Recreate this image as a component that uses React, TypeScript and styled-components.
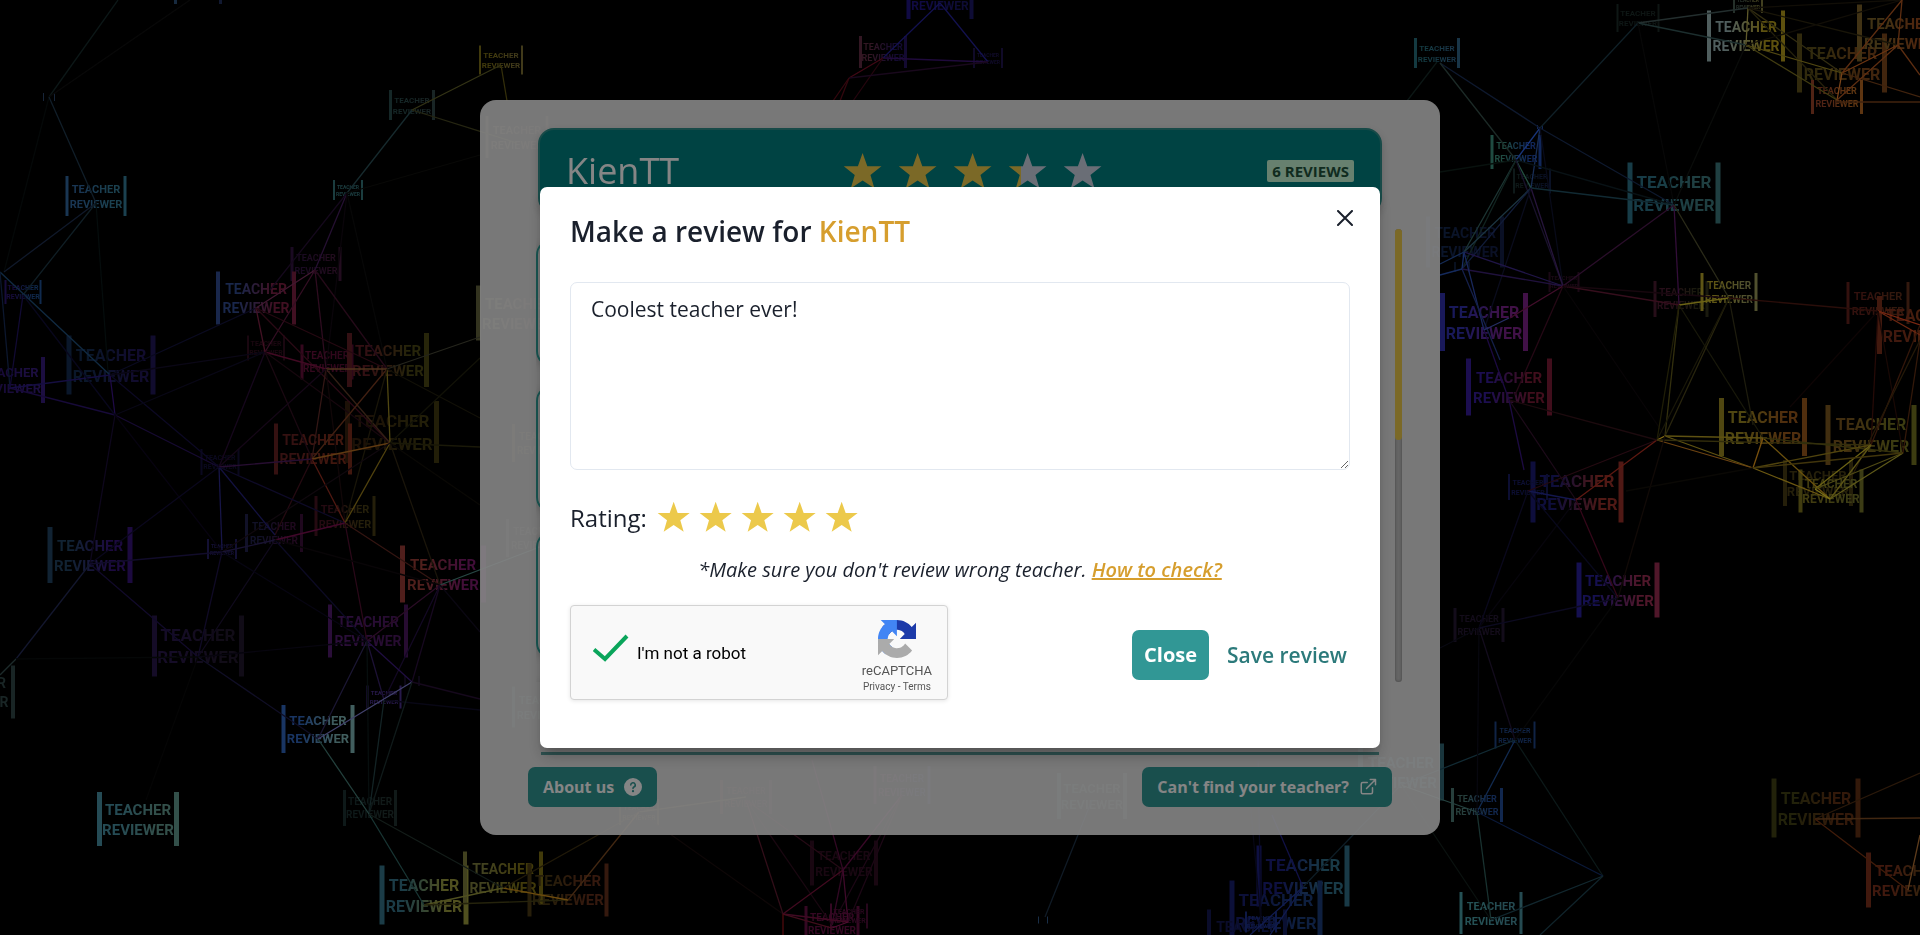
import React from "react";
import styled, { createGlobalStyle } from "styled-components";

const GlobalStyle = createGlobalStyle`
  *, *::before, *::after { box-sizing: border-box; }
  body {
    margin: 0;
    background: #000;
    color: #1a202c;
    font-family: "Open Sans", "Noto Sans", sans-serif;
    overflow: hidden;
  }
  button, textarea { font-family: inherit; }
`;

/* ---------- particle field ---------- */

type Mark = [x: number, y: number, width: number, left: string, right: string];
type Thread = [x1: number, y1: number, x2: number, y2: number, color: string];

const marks: Mark[] = [
  [49, 97, 12, "#1a2a40", "#1a2a40"],
  [198, -12, 48, "#1a3048", "#141c38"],
  [96, 196, 61, "#1d3d5e", "#1f4a5a"],
  [348, 190, 30, "#1f4548", "#1f4548"],
  [412, 105, 46, "#182c2c", "#1c2a2a"],
  [316, 264, 51, "#1e0c26", "#260e22"],
  [256, 298, 80, "#1c2c55", "#4a1226"],
  [23, 292, 37, "#1a0e44", "#123058"],
  [111, 365, 89, "#0c1a30", "#140e34"],
  [10, 380, 70, "#180a3a", "#20104a"],
  [266, 348, 38, "#1e0812", "#1e0812"],
  [327, 362, 53, "#3c0a22", "#34081e"],
  [388, 360, 82, "#3a1216", "#2c2a0c"],
  [392, 432, 94, "#201408", "#26220a"],
  [313, 449, 78, "#3c1414", "#4a1a10"],
  [220, 462, 39, "#0c0a24", "#0c0a20"],
  [90, 555, 85, "#14283a", "#200c48"],
  [222, 549, 30, "#16123a", "#16123a"],
  [274, 533, 58, "#14142e", "#240a22"],
  [345, 516, 61, "#2a0c14", "#2a240c"],
  [198, 646, 92, "#180e2c", "#140e1a"],
  [443, 574, 86, "#5a2420", "#4a1040"],
  [368, 631, 80, "#301040", "#2c0e38"],
  [384, 697, 35, "#2c1c54", "#2c1c54"],
  [412, 681, 15, "#1c1230", "#1c1230"],
  [318, 729, 73, "#1c3c70", "#4a6a6a"],
  [370, 808, 54, "#101c1c", "#141e1c"],
  [138, 819, 82, "#2a5560", "#3a5a54"],
  [-25, 692, 80, "#1c2a2a", "#1c2a2a"],
  [424, 895, 89, "#1f4450", "#5a5a24"],
  [503, 878, 80, "#4a4a24", "#4a420c"],
  [568, 890, 81, "#2c220c", "#3c1c10"],
  [844, 863, 68, "#1c0814", "#1c0814"],
  [832, 924, 55, "#3c0a28", "#3c0a28"],
  [849, 916, 38, "#3c0a28", "#2c0820"],
  [1303, 876, 93, "#10124a", "#1c4250"],
  [1276, 911, 93, "#0e1240", "#102448"],
  [1247, 936, 80, "#0c0e30", "#0c1238"],
  [1261, 922, 32, "#101c50", "#101c50"],
  [1043, 920, 10, "#1c3450", "#1c3450"],
  [940, -3, 67, "#120c4c", "#100e3c"],
  [883, 52, 48, "#3a1a28", "#160c38"],
  [988, 58, 30, "#120c2e", "#120c2e"],
  [501, 60, 44, "#4a420e", "#4a421e"],
  [1437, 53, 46, "#17424a", "#1c3c50"],
  [1638, 18, 43, "#101a18", "#101816"],
  [1748, 3, 30, "#2a3630", "#4a4824"],
  [1746, 36, 78, "#5a6a6a", "#6a5c10"],
  [1842, 63, 90, "#38300f", "#4a2a10"],
  [1900, 33, 86, "#4a3a18", "#5a2a10"],
  [1837, 97, 52, "#5a2818", "#6a3c14"],
  [1516, 152, 51, "#24554a", "#142c66"],
  [1532, 181, 38, "#101c1c", "#0c142a"],
  [1540, 127, 6, "#142c66", "#142c66"],
  [1674, 193, 93, "#1a4450", "#24484a"],
  [1465, 242, 78, "#0c1830", "#0c122a"],
  [1462, 267, 15, "#142448", "#142448"],
  [1484, 322, 88, "#1c1c66", "#4a1450"],
  [1509, 387, 86, "#20105a", "#4a1020"],
  [1564, 282, 31, "#1e0a18", "#1e0a18"],
  [1681, 299, 55, "#2c101c", "#1e1e10"],
  [1729, 292, 57, "#6a6018", "#5a5a34"],
  [1878, 303, 63, "#3a1410", "#3a1c10"],
  [1921, 325, 88, "#4a1c10", "#5a2c10"],
  [1763, 427, 88, "#5a5014", "#5a3410"],
  [1871, 435, 91, "#4a3412", "#444414"],
  [1818, 483, 70, "#2a240c", "#2a240c"],
  [1831, 491, 65, "#4a4412", "#444418"],
  [1577, 492, 93, "#101044", "#5a1c18"],
  [1528, 487, 40, "#0e103a", "#0e1034"],
  [1618, 590, 83, "#18125a", "#5a1a30"],
  [1479, 625, 51, "#160e1e", "#160e1e"],
  [1515, 735, 41, "#12284e", "#12284e"],
  [1477, 805, 52, "#2c4844", "#142c58"],
  [1491, 913, 63, "#2a5c60", "#2a545c"],
  [1401, 772, 86, "#1c3c44", "#1c3c44"],
  [1816, 808, 89, "#26260c", "#3a1c0c"],
  [1908, 880, 84, "#4a1c10", "#3a2a10"],
  [517, 137, 63, "#3a3020", "#2a221c"],
  [518, 313, 84, "#3a3a24", "#2c1216"],
  [541, 443, 58, "#2a2614", "#2a2614"],
  [535, 538, 58, "#24241e", "#24241e"],
  [543, 707, 62, "#1c302c", "#1c302c"],
  [746, 797, 52, "#2a1414", "#24101a"],
  [902, 785, 57, "#341428", "#1a1a36"],
  [639, 812, 40, "#2c2414", "#2c2414"],
  [1092, 796, 70, "#1c302c", "#24302e"],
];

const threads: Thread[] = [
  [49, 97, 118, 0, "#0e1a1a"],
  [49, 97, 190, 0, "#0a0a0a"],
  [49, 97, 4, 272, "#060a0a"],
  [49, 97, 96, 203, "#13222e"],
  [96, 203, 4, 272, "#121c30"],
  [96, 203, 23, 295, "#12222a"],
  [96, 203, 108, 372, "#060e0e"],
  [0, 272, 110, 375, "#13304a"],
  [0, 272, 10, 388, "#0e1a34"],
  [23, 295, 10, 388, "#140c3a"],
  [110, 375, 10, 388, "#18104a"],
  [110, 375, 115, 415, "#240c50"],
  [10, 388, 115, 415, "#1a0c40"],
  [115, 415, 219, 467, "#1a0c38"],
  [115, 415, 90, 564, "#100820"],
  [115, 415, 222, 552, "#080412"],
  [110, 375, 219, 467, "#0e0a28"],
  [23, 295, 115, 415, "#0a0820"],
  [110, 375, 256, 308, "#0c0c24"],
  [110, 375, 265, 352, "#0c0818"],
  [115, 415, 265, 352, "#0a0818"],
  [412, 110, 347, 193, "#1a3034"],
  [412, 110, 501, 65, "#3a3a18"],
  [412, 110, 517, 143, "#2a2a14"],
  [347, 193, 480, 155, "#0a0a08"],
  [347, 193, 315, 270, "#2a1238"],
  [347, 193, 270, 290, "#180a20"],
  [347, 193, 387, 369, "#080808"],
  [347, 193, 326, 369, "#0c060c"],
  [315, 270, 256, 308, "#4a1c38"],
  [315, 270, 265, 352, "#3a1028"],
  [315, 270, 326, 369, "#340e24"],
  [315, 270, 387, 369, "#2a0c1c"],
  [256, 308, 265, 352, "#4a1428"],
  [256, 308, 387, 369, "#2a0a14"],
  [256, 308, 390, 443, "#300c18"],
  [265, 352, 326, 369, "#4a0c28"],
  [265, 352, 219, 467, "#1a0820"],
  [265, 352, 312, 459, "#1e0a14"],
  [265, 352, 390, 443, "#1a0810"],
  [326, 369, 387, 369, "#5a3a20"],
  [326, 369, 390, 443, "#3a2418"],
  [326, 369, 312, 459, "#3a1a18"],
  [326, 369, 219, 467, "#18081a"],
  [326, 369, 345, 523, "#14080a"],
  [387, 369, 390, 443, "#5a5014"],
  [387, 369, 312, 459, "#4a2414"],
  [387, 369, 480, 337, "#2a2a20"],
  [387, 369, 480, 418, "#141208"],
  [387, 369, 345, 523, "#1c180a"],
  [312, 459, 390, 443, "#6a4014"],
  [312, 459, 219, 467, "#2c1038"],
  [312, 459, 345, 523, "#5a1c14"],
  [312, 459, 275, 535, "#2a0c14"],
  [390, 443, 480, 358, "#141408"],
  [390, 443, 480, 447, "#1e1c0a"],
  [390, 443, 345, 523, "#5a4a10"],
  [390, 443, 440, 585, "#1e180c"],
  [390, 443, 222, 552, "#120a10"],
  [390, 443, 480, 505, "#0c0a06"],
  [219, 467, 222, 550, "#1a1850"],
  [219, 467, 275, 535, "#161448"],
  [219, 467, 345, 523, "#100c2c"],
  [219, 467, 90, 564, "#0c0820"],
  [345, 523, 275, 540, "#4a0a30"],
  [345, 523, 367, 641, "#300a1c"],
  [345, 523, 440, 585, "#3a1814"],
  [275, 540, 222, 552, "#1c1638"],
  [275, 540, 367, 641, "#0e0c28"],
  [275, 540, 198, 657, "#120c20"],
  [275, 540, 440, 585, "#0a0608"],
  [222, 552, 90, 564, "#140e30"],
  [222, 552, 198, 657, "#120c2a"],
  [222, 552, 367, 641, "#080614"],
  [90, 564, 16, 659, "#161a34"],
  [90, 564, 198, 657, "#140c30"],
  [16, 659, 0, 675, "#203030"],
  [16, 659, 198, 657, "#060808"],
  [198, 657, 367, 641, "#080610"],
  [198, 657, 318, 739, "#12102a"],
  [198, 657, 146, 800, "#060606"],
  [440, 585, 367, 641, "#300e2a"],
  [440, 585, 384, 700, "#160a28"],
  [440, 585, 412, 682, "#1a0a24"],
  [440, 585, 545, 545, "#2c504c"],
  [440, 585, 480, 632, "#0c0814"],
  [367, 641, 318, 739, "#1e1a3a"],
  [367, 641, 412, 682, "#24104a"],
  [367, 641, 384, 700, "#20143c"],
  [367, 641, 369, 814, "#081010"],
  [412, 682, 318, 739, "#4a4a7a"],
  [412, 682, 480, 699, "#180a20"],
  [384, 700, 480, 710, "#0a0818"],
  [384, 700, 369, 814, "#16282a"],
  [412, 682, 369, 814, "#121e1e"],
  [318, 739, 369, 814, "#284844"],
  [369, 814, 424, 905, "#1c3c3a"],
  [369, 814, 503, 888, "#16201c"],
  [424, 905, 503, 888, "#5a5a24"],
  [424, 905, 568, 900, "#2a280e"],
  [503, 888, 568, 900, "#7a5410"],
  [503, 888, 639, 812, "#241c0a"],
  [568, 900, 639, 812, "#4a2c14"],
  [639, 812, 746, 797, "#3a2e1a"],
  [639, 812, 783, 914, "#100808"],
  [783, 914, 746, 800, "#38101c"],
  [746, 800, 843, 870, "#2a0c18"],
  [746, 800, 832, 925, "#1c0812"],
  [783, 914, 843, 870, "#4a0c24"],
  [843, 870, 812, 760, "#380a28"],
  [843, 870, 902, 795, "#400a2c"],
  [902, 795, 832, 925, "#200818"],
  [902, 795, 848, 922, "#200818"],
  [843, 870, 832, 925, "#380a28"],
  [843, 870, 848, 922, "#480c30"],
  [783, 914, 848, 922, "#4a0c28"],
  [783, 914, 832, 928, "#4a1020"],
  [783, 914, 783, 935, "#5a0c10"],
  [832, 928, 848, 922, "#5a1038"],
  [1045, 917, 1092, 800, "#121e2a"],
  [1303, 887, 1272, 815, "#141450"],
  [1303, 887, 1250, 935, "#14205a"],
  [1303, 887, 1270, 935, "#14205a"],
  [1303, 887, 1401, 785, "#10202a"],
  [1261, 922, 1258, 760, "#0a0a24"],
  [1261, 922, 1250, 800, "#080818"],
  [1603, 876, 1515, 740, "#0e1c1c"],
  [1603, 876, 1477, 812, "#0c1c40"],
  [1603, 876, 1491, 920, "#142c34"],
  [1603, 876, 1540, 935, "#122830"],
  [1477, 812, 1515, 740, "#14305a"],
  [1477, 812, 1401, 785, "#2a4a48"],
  [1477, 812, 1491, 920, "#1c3836"],
  [1401, 785, 1515, 740, "#14303a"],
  [1401, 785, 1491, 920, "#0c1412"],
  [1479, 628, 1477, 812, "#080810"],
  [1479, 628, 1515, 740, "#160e20"],
  [1479, 628, 1528, 491, "#0c0a20"],
  [1479, 628, 1576, 500, "#08060e"],
  [1479, 628, 1618, 598, "#0e0c24"],
  [1479, 628, 1440, 648, "#0a0a14"],
  [1515, 740, 1618, 598, "#080808"],
  [1528, 491, 1576, 500, "#161a58"],
  [1528, 491, 1618, 598, "#0a0a20"],
  [1528, 491, 1657, 440, "#2a0c14"],
  [1576, 500, 1618, 598, "#3a081c"],
  [1576, 500, 1657, 440, "#6a1c14"],
  [1509, 400, 1576, 500, "#200c1c"],
  [1638, 23, 1748, 8, "#283434"],
  [1638, 23, 1746, 45, "#203434"],
  [1638, 23, 1540, 128, "#12242c"],
  [1638, 23, 1674, 205, "#080808"],
  [1746, 45, 1674, 205, "#0c0e0c"],
  [1440, 63, 1540, 128, "#101c34"],
  [1440, 63, 1516, 160, "#20302c"],
  [1437, 62, 1407, 101, "#0e1a18"],
  [1540, 128, 1516, 160, "#1c3c8a"],
  [1540, 128, 1531, 188, "#1c3460"],
  [1540, 128, 1674, 205, "#101c34"],
  [1540, 128, 1563, 286, "#0a0c1c"],
  [1516, 160, 1531, 188, "#2a5a4a"],
  [1516, 160, 1464, 252, "#203c3a"],
  [1516, 160, 1462, 269, "#142824"],
  [1516, 160, 1674, 205, "#0a1418"],
  [1516, 160, 1440, 172, "#0a1410"],
  [1516, 160, 1563, 286, "#1c1430"],
  [1531, 188, 1674, 205, "#14303a"],
  [1531, 188, 1464, 252, "#203c4a"],
  [1531, 188, 1462, 269, "#142040"],
  [1531, 188, 1563, 286, "#2c1844"],
  [1531, 188, 1484, 330, "#0c0e20"],
  [1464, 252, 1563, 286, "#241850"],
  [1464, 252, 1462, 269, "#1c3470"],
  [1462, 269, 1563, 286, "#241444"],
  [1464, 252, 1484, 330, "#1c2c66"],
  [1462, 269, 1500, 360, "#182454"],
  [1440, 264, 1464, 252, "#183060"],
  [1440, 275, 1462, 269, "#183068"],
  [1674, 205, 1563, 286, "#301030"],
  [1674, 205, 1679, 305, "#3a1040"],
  [1674, 205, 1729, 298, "#30301c"],
  [1563, 286, 1679, 305, "#3c1020"],
  [1563, 286, 1729, 298, "#1a0810"],
  [1563, 286, 1510, 318, "#4a1030"],
  [1563, 286, 1515, 395, "#2a0a18"],
  [1563, 286, 1665, 436, "#0a0608"],
  [1679, 305, 1729, 298, "#7a7018"],
  [1679, 305, 1665, 436, "#3a3610"],
  [1679, 305, 1657, 440, "#242208"],
  [1679, 305, 1763, 438, "#1c1c0c"],
  [1729, 298, 1665, 436, "#2e2a10"],
  [1729, 298, 1657, 440, "#1c1a0a"],
  [1729, 298, 1753, 425, "#222010"],
  [1729, 298, 1878, 311, "#30100c"],
  [1878, 311, 1920, 325, "#8a2c14"],
  [1878, 311, 1920, 335, "#7a2c14"],
  [1878, 311, 1871, 445, "#2a0c08"],
  [1878, 311, 1903, 453, "#1c0a06"],
  [1878, 311, 1790, 407, "#100606"],
  [1920, 325, 1871, 445, "#3a1a0c"],
  [1920, 340, 1903, 453, "#3a1c0c"],
  [1920, 340, 1850, 480, "#2a1c0a"],
  [1665, 436, 1763, 438, "#6a5c14"],
  [1665, 436, 1753, 468, "#6a5c14"],
  [1665, 436, 1657, 440, "#9a7a18"],
  [1657, 440, 1753, 468, "#7a4c14"],
  [1657, 440, 1871, 445, "#3a340e"],
  [1657, 440, 1509, 400, "#200c10"],
  [1665, 436, 1618, 598, "#140c08"],
  [1763, 438, 1753, 468, "#8a5c10"],
  [1763, 438, 1830, 499, "#7a5c10"],
  [1763, 438, 1903, 453, "#3a360e"],
  [1871, 445, 1753, 468, "#5a4c10"],
  [1871, 445, 1815, 489, "#7a7018"],
  [1871, 445, 1830, 499, "#6a6018"],
  [1903, 453, 1815, 489, "#5a5418"],
  [1903, 453, 1830, 499, "#6a641c"],
  [1753, 468, 1830, 499, "#7a6414"],
  [1753, 468, 1903, 453, "#4a3c0e"],
  [1753, 468, 1626, 491, "#0c0a06"],
  [1815, 489, 1830, 499, "#8a801c"],
  [1484, 330, 1509, 400, "#200c4a"],
  [1484, 330, 1509, 318, "#2a3470"],
  [1509, 400, 1524, 470, "#200c4a"],
  [1748, 8, 1746, 45, "#6a6430"],
  [1748, 8, 1842, 73, "#3a3414"],
  [1748, 8, 1837, 100, "#2a260e"],
  [1748, 8, 1898, 45, "#1c180a"],
  [1748, 8, 1902, 0, "#141008"],
  [1746, 45, 1842, 73, "#5a5014"],
  [1746, 45, 1837, 100, "#4a4414"],
  [1746, 45, 1902, 0, "#141008"],
  [1842, 73, 1837, 100, "#8a4c1c"],
  [1842, 73, 1902, 0, "#6a3414"],
  [1842, 73, 1898, 45, "#7a3c14"],
  [1842, 73, 1920, 97, "#4a2810"],
  [1837, 100, 1898, 45, "#6a3414"],
  [1837, 102, 1920, 102, "#4a2810"],
  [1898, 45, 1902, 0, "#6a3414"],
  [1898, 45, 1920, 75, "#6a3414"],
  [1815, 819, 1920, 773, "#301c0c"],
  [1815, 819, 1920, 818, "#4a2c14"],
  [1815, 819, 1908, 890, "#4a200c"],
  [1908, 890, 1920, 835, "#6a4420"],
  [940, 3, 988, 62, "#16145a"],
  [940, 3, 883, 58, "#16145a"],
  [883, 58, 988, 62, "#240c44"],
  [883, 58, 849, 78, "#4a0a18"],
  [883, 58, 853, 101, "#2a0610"],
  [849, 78, 988, 62, "#1c0a20"],
  [849, 78, 840, 101, "#3a0810"],
  [849, 78, 833, 101, "#3a0810"],
  [501, 65, 507, 101, "#3a340c"],
];

const Field = styled.svg`
  position: fixed;
  inset: 0;
  width: 100%;
  height: 100%;
  filter: brightness(1.7);
  font-family: Roboto, sans-serif;
  font-weight: 700;
`;

function ParticleField() {
  return (
    <Field viewBox="0 0 1920 935" preserveAspectRatio="xMidYMid slice" aria-hidden="true">
      <defs>
        {marks.map(([, , , a, b], i) => (
          <linearGradient id={`mark${i}`} key={i}>
            <stop offset="0.2" stopColor={a} />
            <stop offset="0.8" stopColor={b} />
          </linearGradient>
        ))}
      </defs>
      {marks.map(([x, y, w, a, b], i) => {
        const h = Math.round(w * 0.66);
        const bar = Math.max(1, Math.round(w * 0.055));
        const size = Math.round(w * 0.18);
        return (
          <g key={i} textAnchor="middle" fontSize={size} fill={`url(#mark${i})`}>
            <rect x={x - w / 2} y={y - h / 2} width={bar} height={h} fill={a} />
            <rect x={x + w / 2 - bar} y={y - h / 2} width={bar} height={h} fill={b} />
            {w > 20 && (
              <>
                <text x={x} y={y - w * 0.05}>TEACHER</text>
                <text x={x} y={y + w * 0.19}>REVIEWER</text>
              </>
            )}
          </g>
        );
      })}
      {threads.map(([x1, y1, x2, y2, color], i) => (
        <line key={i} x1={x1} y1={y1} x2={x2} y2={y2} stroke={color} strokeWidth={1.3} />
      ))}
    </Field>
  );
}

/* ---------- shared star ---------- */

const StarSvg = styled.svg<{ $size: number }>`
  display: block;
  width: ${(p) => p.$size}px;
  height: ${(p) => p.$size - 2}px;
`;

const STAR = "m25,1 6,17h18l-14,11 5,17-15-10-15,10 5-17-14-11h18z";

function Star({ size, fill = 1 }: { size: number; fill?: number }) {
  const id = `star-${fill * 100}`;
  return (
    <StarSvg $size={size} viewBox="0 0 51 48" aria-hidden="true">
      <linearGradient id={id}>
        <stop offset={fill} stopColor="#ecc94b" />
        <stop offset={fill} stopColor="#cbd3e3" />
      </linearGradient>
      <path d={STAR} fill={`url(#${id})`} />
    </StarSvg>
  );
}

/* ---------- page behind the dialog ---------- */

const Page = styled.main`
  position: relative;
  min-height: 100vh;
  display: flex;
  align-items: center;
  justify-content: center;
`;

const Panel = styled.section`
  width: 50%;
  min-width: 900px;
  padding: 28px 38px;
  display: flex;
  flex-direction: column;
  border-radius: 16px;
  background: rgba(255, 255, 255, 0.9);
`;

const TeacherBar = styled.header`
  margin: 0 20px;
  height: 86px;
  padding: 0 26px;
  display: flex;
  align-items: center;
  justify-content: space-between;
  border: 2px solid #2f8f8a;
  border-radius: 16px;
  background: #008080;
  box-shadow: 0 4px 8px rgba(0, 0, 0, 0.2);
`;

const TeacherName = styled.h1`
  margin: 0;
  font-size: 36px;
  line-height: 48px;
  font-weight: 400;
  color: #fff;
`;

const TeacherStars = styled.div`
  display: flex;
  gap: 15px;
`;

const CountBadge = styled.span`
  padding: 0 5px;
  border-radius: 2px;
  background: #c6f6d5;
  color: #22543d;
  font-size: 15px;
  line-height: 22px;
  font-weight: 700;
`;

const ReviewArea = styled.div`
  display: flex;
  justify-content: space-between;
  height: 453px;
  margin: 15px 0 70px 18px;
`;

const ReviewList = styled.div`
  width: 840px;
  padding-top: 10px;
  overflow: hidden;
`;

const ReviewCard = styled.article`
  height: 128px;
  margin-bottom: 18px;
  border: 2px solid #2fa39b;
  border-radius: 16px;
  box-shadow: 0 2px 8px rgba(0, 0, 0, 0.2);
`;

const ScrollTrack = styled.div`
  width: 7px;
  border-radius: 4px;
  background: #c2c2c2;
  box-shadow: inset 0 0 3px rgba(0, 0, 0, 0.35);
`;

const ScrollThumb = styled.div`
  height: 211px;
  border-radius: 4px;
  background: #ecc94b;
`;

const Rule = styled.hr`
  width: 838px;
  height: 3px;
  margin: 0 auto 12px;
  border: 0;
  background: #5a9e9b;
`;

const PanelFooter = styled.footer`
  display: flex;
  justify-content: space-between;
  margin: 0 10px;
`;

const SolidButton = styled.button<{ $large?: boolean }>`
  display: flex;
  align-items: center;
  gap: 10px;
  height: ${(p) => (p.$large ? 50 : 40)}px;
  padding: 0 ${(p) => (p.$large ? 12 : 15)}px;
  border: 0;
  border-radius: 7px;
  background: #319795;
  color: #fff;
  font-size: ${(p) => (p.$large ? 20 : 16)}px;
  font-weight: 700;
`;

/* ---------- dialog ---------- */

const Overlay = styled.div`
  position: fixed;
  inset: 0;
  display: flex;
  align-items: center;
  justify-content: center;
  background: rgba(0, 0, 0, 0.48);
`;

const Dialog = styled.section`
  position: relative;
  width: 840px;
  padding: 24px 30px 48px;
  display: flex;
  flex-direction: column;
  border-radius: 7px;
  background: #fff;
  box-shadow: 0 10px 15px -3px rgba(0, 0, 0, 0.3), 0 4px 6px -2px rgba(0, 0, 0, 0.1);
`;

const DialogTitle = styled.h2`
  margin: 0 0 31px;
  font-size: 28px;
  line-height: 40px;
  font-weight: 600;
`;

const Accent = styled.span`
  color: #d69e2e;
`;

const DismissButton = styled.button`
  position: absolute;
  top: 14px;
  right: 18px;
  width: 34px;
  height: 34px;
  display: grid;
  place-items: center;
  border: 0;
  background: none;
`;

const Comment = styled.textarea`
  display: block;
  width: 100%;
  height: 188px;
  padding: 10px 20px;
  border: 1px solid #e2e8f0;
  border-radius: 7px;
  background: #fff;
  color: #1a202c;
  font-size: 21px;
  line-height: 32px;
  resize: vertical;
  outline: none;
`;

const RatingRow = styled.div`
  display: flex;
  align-items: center;
  gap: 10px;
  margin-top: 24px;
  height: 46px;
  font-size: 24px;
  font-weight: 500;
`;

const RatingStars = styled.div`
  display: flex;
  gap: 8px;
`;

const StarButton = styled.button`
  padding: 0;
  border: 0;
  background: none;
`;

const Note = styled.p`
  margin: 16px 0 21px;
  text-align: center;
  font-size: 20px;
  line-height: 28px;
  font-weight: 500;
  font-style: italic;
`;

const NoteLink = styled.a`
  color: #d69e2e;
  font-weight: 600;
  text-decoration: underline;
`;

const Actions = styled.div`
  display: flex;
  align-items: center;
  justify-content: space-between;
`;

const ActionButtons = styled.div`
  display: flex;
  align-items: center;
  gap: 18px;
  padding: 4px 3px 0 0;
`;

const TextButton = styled.button`
  padding: 0;
  border: 0;
  background: none;
  color: #2c7a7b;
  font-size: 21px;
  font-weight: 600;
`;

const Captcha = styled.div`
  display: flex;
  align-items: center;
  justify-content: space-between;
  width: 378px;
  height: 95px;
  padding: 0 15px 0 22px;
  border: 1px solid #d3d3d3;
  border-radius: 4px;
  background: #f9f9f9;
  box-shadow: 0 1px 4px rgba(0, 0, 0, 0.1);
  font-family: Roboto, sans-serif;
  color: #000;
`;

const CaptchaLabel = styled.label`
  display: flex;
  align-items: center;
  gap: 8px;
  font-size: 17px;
`;

const HiddenCheck = styled.input`
  position: absolute;
  opacity: 0;
  width: 1px;
  height: 1px;
  margin: 0;
`;

const Tick = styled.svg`
  width: 36px;
  height: 28px;
  margin-bottom: 10px;
`;

const CaptchaBrand = styled.div`
  display: flex;
  flex-direction: column;
  align-items: center;
  padding-top: 8px;
  color: #555;
  font-size: 13px;
  line-height: 18px;
`;

const BrandLogo = styled.svg`
  width: 38px;
  height: 38px;
  margin-bottom: 4px;
`;

const BrandLinks = styled.div`
  font-size: 10px;
  line-height: 14px;
  a {
    color: inherit;
    text-decoration: none;
  }
`;

export default function App() {
  return (
    <>
      <GlobalStyle />
      <ParticleField />
      <Page>
        <Panel>
          <TeacherBar>
            <TeacherName>KienTT</TeacherName>
            <TeacherStars role="img" aria-label="3.3 out of 5 stars">
              <Star size={40} />
              <Star size={40} />
              <Star size={40} />
              <Star size={40} fill={0.33} />
              <Star size={40} fill={0} />
            </TeacherStars>
            <CountBadge>6 REVIEWS</CountBadge>
          </TeacherBar>
          <ReviewArea>
            <ReviewList>
              <ReviewCard />
              <ReviewCard />
              <ReviewCard />
              <ReviewCard />
            </ReviewList>
            <ScrollTrack>
              <ScrollThumb />
            </ScrollTrack>
          </ReviewArea>
          <Rule />
          <PanelFooter>
            <SolidButton type="button">
              About us
              <svg width="18" height="18" viewBox="0 0 24 24" aria-hidden="true">
                <path
                  fill="currentColor"
                  d="M12,0A12,12,0,1,0,24,12,12.013,12.013,0,0,0,12,0Zm0,19a1.5,1.5,0,1,1,1.5-1.5A1.5,1.5,0,0,1,12,19Zm1.6-6.08a1,1,0,0,0-.6.917,1,1,0,1,1-2,0,3,3,0,0,1,1.8-2.75A2,2,0,1,0,10,9.255a1,1,0,1,1-2,0,4,4,0,1,1,5.6,3.666Z"
                />
              </svg>
            </SolidButton>
            <SolidButton type="button">
              Can't find your teacher?
              <svg
                width="18"
                height="18"
                viewBox="0 0 24 24"
                fill="none"
                stroke="currentColor"
                strokeWidth="2"
                strokeLinecap="round"
                strokeLinejoin="round"
                aria-hidden="true"
              >
                <path d="M18 13v6a2 2 0 0 1-2 2H5a2 2 0 0 1-2-2V8a2 2 0 0 1 2-2h6M15 2h7v7M10 14L22 2" />
              </svg>
            </SolidButton>
          </PanelFooter>
        </Panel>
      </Page>
      <Overlay>
        <Dialog role="dialog" aria-modal="true" aria-labelledby="dialog-title">
          <DismissButton type="button" aria-label="Close dialog">
            <svg width="16" height="16" viewBox="0 0 16 16" aria-hidden="true">
              <path d="M1 1L15 15M15 1L1 15" stroke="#1a202c" strokeWidth="2" strokeLinecap="round" />
            </svg>
          </DismissButton>
          <DialogTitle id="dialog-title">
            Make a review for <Accent>KienTT</Accent>
          </DialogTitle>
          <Comment aria-label="Review" defaultValue="Coolest teacher ever!" />
          <RatingRow>
            <span>Rating:</span>
            <RatingStars>
              {[1, 2, 3, 4, 5].map((n) => (
                <StarButton type="button" key={n} aria-label={`${n} stars`}>
                  <Star size={34} />
                </StarButton>
              ))}
            </RatingStars>
          </RatingRow>
          <Note>
            *Make sure you don't review wrong teacher. <NoteLink href="#check">How to check?</NoteLink>
          </Note>
          <Actions>
            <Captcha>
              <CaptchaLabel>
                <HiddenCheck type="checkbox" defaultChecked />
                <Tick viewBox="0 0 36 28" aria-hidden="true">
                  <path d="M1 15.5L12 25L34 2" fill="none" stroke="#0aa55b" strokeWidth="4" />
                </Tick>
                I'm not a robot
              </CaptchaLabel>
              <CaptchaBrand>
                <BrandLogo viewBox="0 0 64 64" aria-hidden="true">
                  <path
                    fill="#1c3aa9"
                    d="M64 31.955l-.033-1.37V4.687l-7.16 7.16C50.948 4.674 42.033.093 32.05.093c-10.4 0-19.622 4.96-25.458 12.64l11.736 11.86a15.55 15.55 0 0 1 4.754-5.334c2.05-1.6 4.952-2.906 8.968-2.906.485 0 .86.057 1.135.163 4.976.393 9.288 3.14 11.828 7.124l-8.307 8.307L64 31.953"
                  />
                  <path
                    fill="#4285f4"
                    d="M31.862.094l-1.37.033H4.594l7.16 7.16C4.58 13.147 0 22.06 0 32.046c0 10.4 4.96 19.622 12.64 25.458L24.5 45.768a15.55 15.55 0 0 1-5.334-4.754c-1.6-2.05-2.906-4.952-2.906-8.968 0-.485.057-.86.163-1.135.393-4.976 3.14-9.288 7.124-11.828l8.307 8.307L31.86.095"
                  />
                  <path
                    fill="#ababab"
                    d="M.001 32.045l.033 1.37v25.898l7.16-7.16c5.86 7.173 14.774 11.754 24.76 11.754 10.4 0 19.622-4.96 25.458-12.64l-11.736-11.86a15.55 15.55 0 0 1-4.754 5.334c-2.05 1.6-4.952 2.906-8.968 2.906-.485 0-.86-.057-1.135-.163-4.976-.393-9.288-3.14-11.828-7.124l8.307-8.307c-10.522.04-22.4.066-27.295-.005"
                  />
                </BrandLogo>
                reCAPTCHA
                <BrandLinks>
                  <a href="#privacy">Privacy</a> - <a href="#terms">Terms</a>
                </BrandLinks>
              </CaptchaBrand>
            </Captcha>
            <ActionButtons>
              <SolidButton type="button" $large>
                Close
              </SolidButton>
              <TextButton type="button">Save review</TextButton>
            </ActionButtons>
          </Actions>
        </Dialog>
      </Overlay>
    </>
  );
}
